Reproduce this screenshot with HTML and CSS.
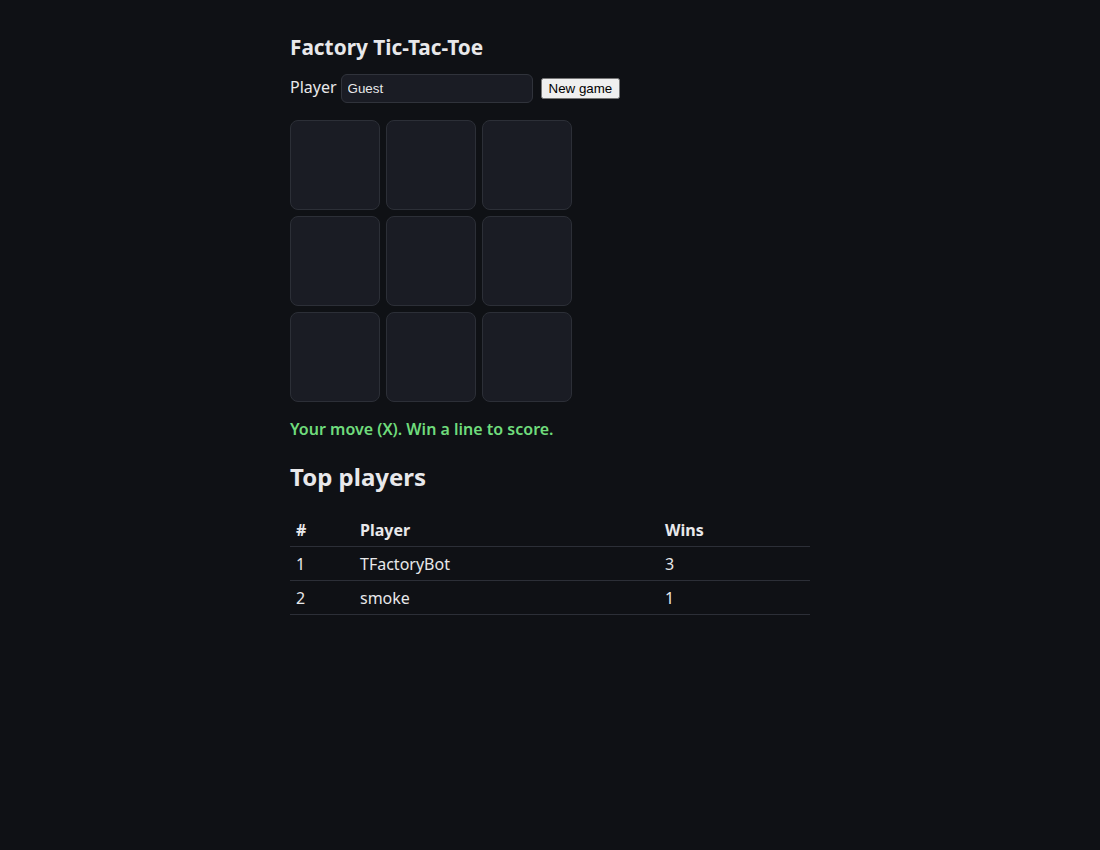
FILE: index.html
```html
<!DOCTYPE html>
<html lang="en">
<head>
    <meta charset="UTF-8">
    <meta name="viewport" content="width=device-width, initial-scale=1.0">
    <title>Factory Tic-Tac-Toe</title>
    <link rel="stylesheet" href="styles.css">
</head>
<body>
    <main class="app">
        <h1>Factory Tic-Tac-Toe</h1>
        <div class="player-row">
            <label for="player">Player</label>
            <input id="player" type="text" value="Guest">
            <button id="new-game">New game</button>
        </div>
        <div class="board">
            <button class="cell"></button>
            <button class="cell"></button>
            <button class="cell"></button>
            <button class="cell"></button>
            <button class="cell"></button>
            <button class="cell"></button>
            <button class="cell"></button>
            <button class="cell"></button>
            <button class="cell"></button>
        </div>
        <p class="status">Your move (X). Win a line to score.</p>
        <h2>Top players</h2>
        <table class="scores">
            <thead>
                <tr><th class="rank">#</th><th class="name">Player</th><th>Wins</th></tr>
            </thead>
            <tbody>
                <tr><td>1</td><td>TFactoryBot</td><td>3</td></tr>
                <tr><td>2</td><td>smoke</td><td>1</td></tr>
            </tbody>
        </table>
    </main>
</body>
</html>
```

FILE: styles.css
```css
body{
    margin: 0;
    background-color: #0f1115;
    color: #e8e8ea;
    font-family: "Noto Sans", "Open Sans", sans-serif;
    font-size: 16px;
}
.app{
    max-width: 520px;
    margin: 0 auto;
    padding-top: 33px;
}
h1{
    font-size: 20.8px;
    margin: 0 0 13px;
    line-height: 28px;
}
.player-row{
    display: flex;
    align-items: baseline;
    height: 29px;
}
.player-row label{
    margin-right: 4px;
}
#player{
    width: 192px;
    height: 29px;
    box-sizing: border-box;
    padding: 4px 6px;
    background-color: #1a1c24;
    color: #e8e8ea;
    border: 1px solid #30333b;
    border-radius: 6px;
    font-family: "Liberation Sans", Arial, sans-serif;
    font-size: 13.33px;
}
#new-game{
    margin-left: 8px;
    font-family: "Liberation Sans", Arial, sans-serif;
    font-size: 13.33px;
}
.board{
    display: grid;
    grid-template-columns: repeat(3, 90px);
    grid-auto-rows: 90px;
    gap: 6px;
    margin-top: 17px;
}
.cell{
    background-color: #1a1c24;
    border: 1px solid #2c2f37;
    border-radius: 8px;
    padding: 0;
}
.status{
    color: #6fdc7c;
    font-weight: 600;
    margin: 16px 0 0;
    line-height: 22px;
}
h2{
    font-size: 24px;
    margin: 20px 0 21px;
    line-height: 33px;
}
.scores{
    width: 100%;
    border-collapse: collapse;
}
.scores th,
.scores td{
    text-align: left;
    padding: 7px 6px 5px;
    line-height: 21px;
    border-bottom: 1px solid #2c2f37;
}
.scores th{
    padding: 6px 6px 5px;
}
.scores .rank{
    width: 52px;
}
.scores .name{
    width: 293px;
}
```
